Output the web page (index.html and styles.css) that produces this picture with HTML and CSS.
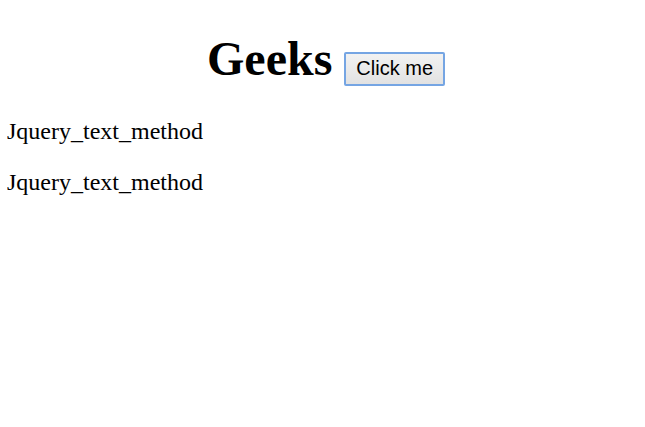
FILE: index.html
```html
<!DOCTYPE html>
<html>
<head>
<meta charset="utf-8">
<link rel="stylesheet" href="styles.css">
</head>
<body>
<h1 class="title">Geeks <button class="btn">Click me</button></h1>
<p class="line">Jquery_text_method</p>
<p class="line">Jquery_text_method</p>
</body>
</html>
```
FILE: styles.css
```css
html, body {
  background: #ffffff;
}
body {
  margin: 0 0 0 7px;
  font-family: "Liberation Serif", "Times New Roman", serif;
  color: #000000;
}
.title {
  text-align: center;
  font-size: 48px;
  font-weight: bold;
  margin: 31px 0 32px;
  line-height: normal;
}
.btn {
  font-family: "Liberation Sans", Arial, sans-serif;
  font-size: 20px;
  color: #000000;
  padding: 3px 10px 4px;
  border: 2px solid #75a5e3;
  border-radius: 2px;
  background: linear-gradient(#f2f2f2, #e2e2e2);
  vertical-align: baseline;
  line-height: 23px;
}
.line {
  font-size: 24px;
  margin: 24px 0;
}
```
